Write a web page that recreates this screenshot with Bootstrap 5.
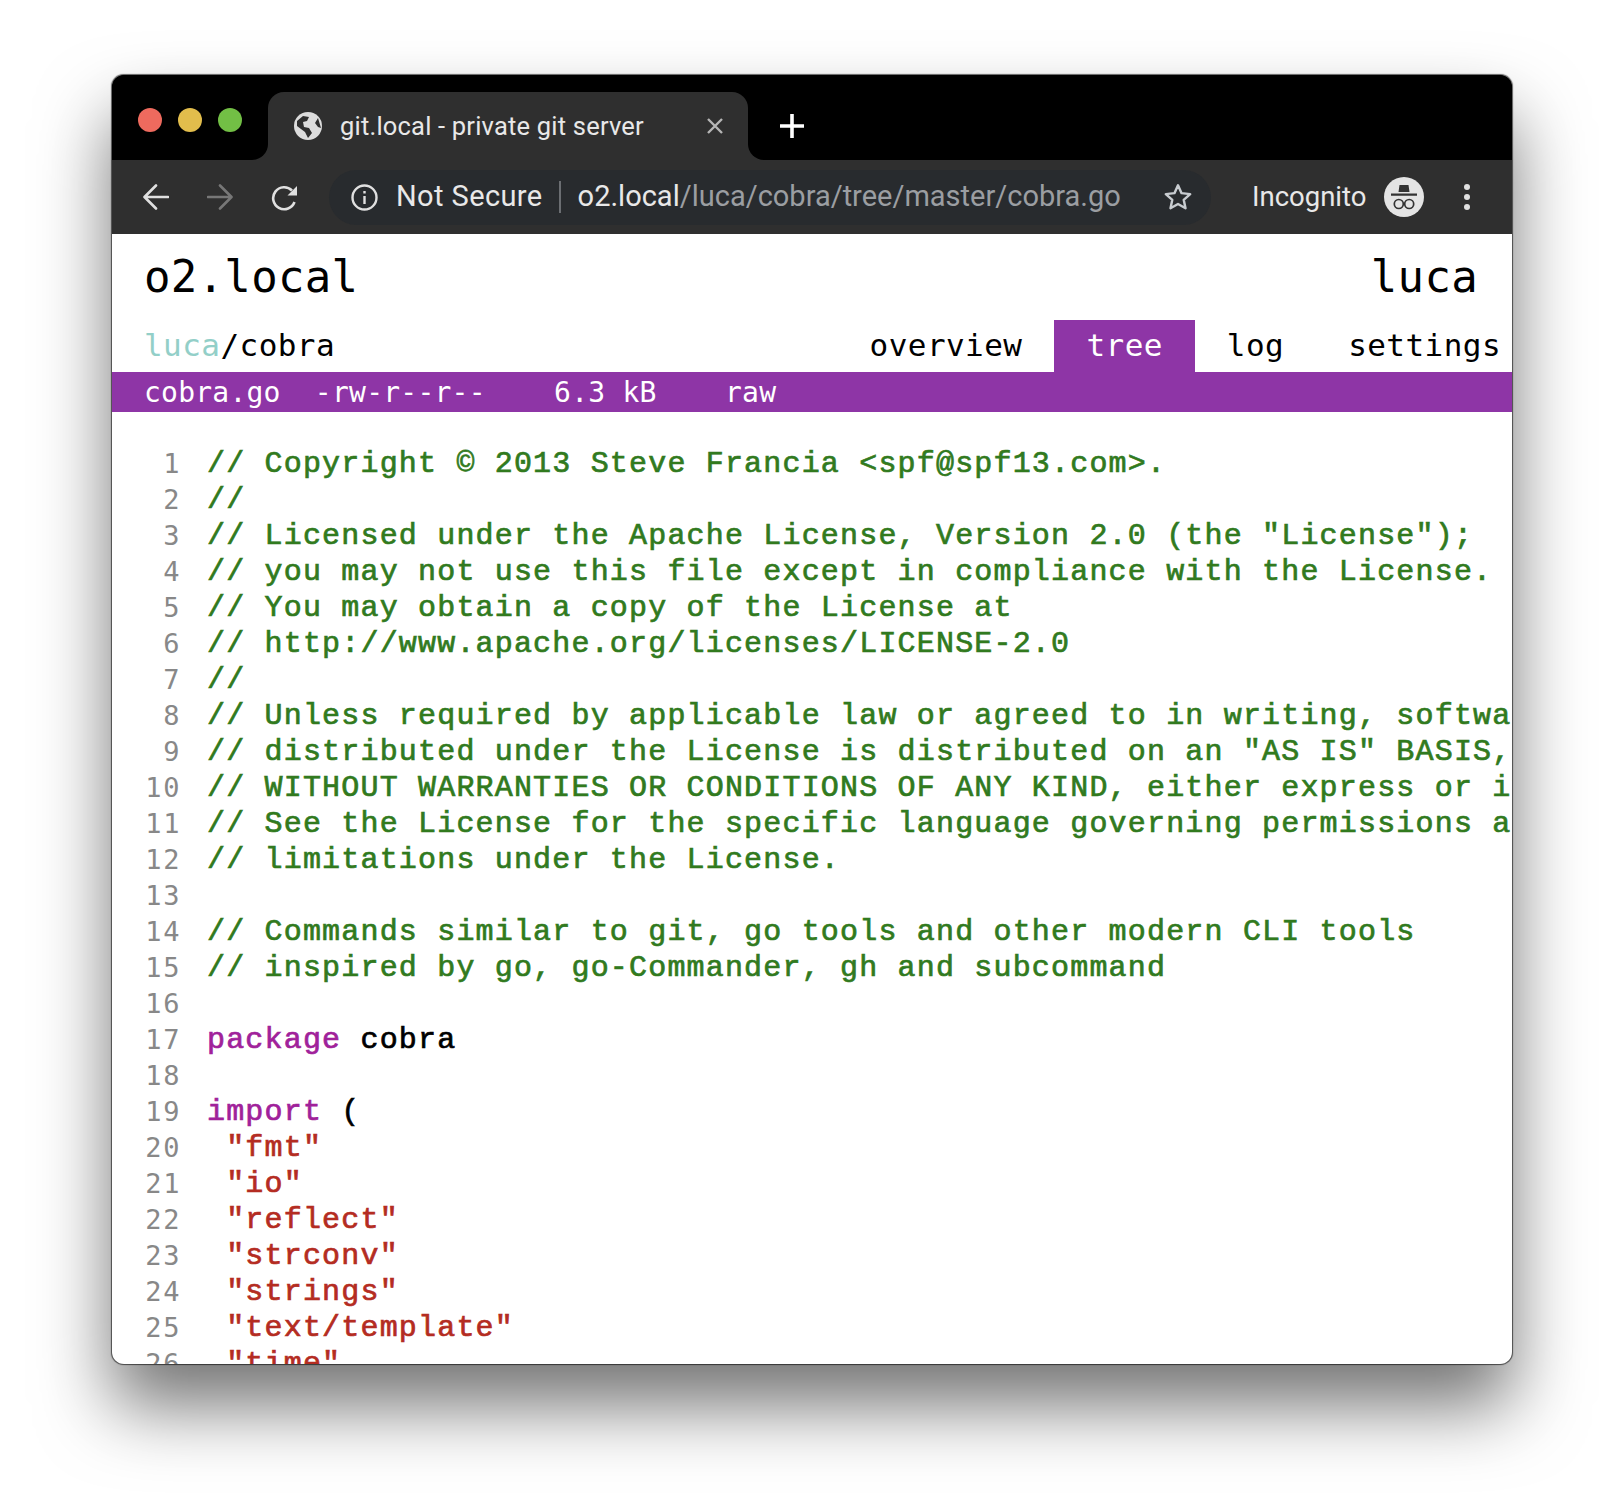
<!DOCTYPE html>
<html lang="en"><head><meta charset="utf-8"><title>git.local - private git server</title>
<link href="https://cdn.jsdelivr.net/npm/bootstrap@5.3.0/dist/css/bootstrap.min.css" rel="stylesheet">
<style>
html,body{height:100%;margin:0}
body{background:#fff;overflow:hidden}
.stage{padding:75px 112px 0;height:1512px;background:#fff}
.win{height:1289px;border-radius:12px;overflow:hidden;box-shadow:0 0 1px .5px rgba(0,0,0,.6),0 42px 72px rgba(0,0,0,.55);background:#fff;display:flex;flex-direction:column}
.chrome-top{height:85px;background:linear-gradient(#000 60%,#2f2f2f 60%);flex:none}
.lights{width:156px;gap:16px;padding:4px 0 0 26px;background:#000;border-bottom-right-radius:16px}
.dot{width:24px;height:24px;border-radius:50%}
.d1{background:#ee6a5e}.d2{background:#e2bd4c}.d3{background:#72bf45}
.tabx{width:480px;height:68px;margin-top:17px;background:#2f2f2f;border-radius:16px 16px 0 0;color:#e8e8e8;font:25.5px Roboto,"Liberation Sans",sans-serif;letter-spacing:.2px;padding:0 24px 0 26px}
.tabx .tt{margin-left:18px;flex:1;white-space:nowrap}
.tab-rest{background:#000;border-bottom-left-radius:16px;padding:16px 0 0 31px}
.chrome-bar{height:74px;background:#2f2f2f;flex:none;color:#e8e8e8;font-family:Roboto,"Liberation Sans",sans-serif;padding:0 0 0 31px;gap:38px}
.omni{width:882px;height:55px;margin-left:-7px;border-radius:28px;background:#282b2e;font-size:29px;padding:0 0 0 22px;white-space:nowrap}
.omni .lbl{margin-left:18px;letter-spacing:.4px}
.omni .sep{width:2px;height:32px;background:#6b6e72;margin:0 17px 0 16px}
.omni .dim{color:#9b9ea2}
.bar-right{margin-left:3px}
.inc{font-size:27.5px}
.inc-ico{width:40px;height:40px;border-radius:50%;background:#e4e4e4;margin-left:18px;margin-right:38px}
.page{flex:1;overflow:hidden}
.ftxt{font-family:"DejaVu Sans Mono","Liberation Mono",monospace;color:#000}
.head1{font-size:44px;line-height:50px;padding:18px 34px 0 32px;height:86px;letter-spacing:.3px}
.head2{height:52px;font-size:31px;padding:0 0 0 32px;letter-spacing:.44px}
.head2 a{color:inherit;text-decoration:none;padding:0 32px 2px;height:52px;display:flex;align-items:center}
.head2 a.lastx{padding-right:11px}
.head2 .crumb{padding-bottom:2px}
.head2 .ac{background:#8e35a6;color:#fff}
.lnk{color:#93cfc8}
.bar{background:#8e35a6;color:#fff;height:40px;font-size:28px;letter-spacing:.23px;padding:1px 32px 0;white-space:pre;line-height:40px}
.codebox{padding:34px 0 0 0;display:flex;font:400 30px/36px "Liberation Mono",monospace;letter-spacing:1.18px}
.nums{width:69px;text-align:right;color:#888;flex:none;margin-right:26px;font:400 27px/36px "DejaVu Sans Mono",monospace;letter-spacing:1.6px;white-space:pre}
.srcx{margin:0;font:inherit;white-space:pre;overflow:visible;color:#000;-webkit-text-stroke:.7px currentColor}
.cm{color:#317a1e}.kw{color:#a0219a}.st{color:#b42c22}
</style></head><body>
<div class="stage"><div class="win">
<div class="chrome-top d-flex">
 <div class="lights d-flex align-items-center"><span class="dot d1"></span><span class="dot d2"></span><span class="dot d3"></span></div>
 <div class="tabx d-flex align-items-center">
  <svg width="28" height="28" viewBox="0 0 28 28"><circle cx="14" cy="14" r="14" fill="#dcdcdc"/><path d="M3 9l6-5 6 1-2 4-4 1 1 5 5 1 3 5-4 5-3-6-4-3-4-3zM24 6l-3 5 3 4 3 1z" fill="#2f2f2f"/></svg>
  <span class="tt">git.local - private git server</span>
  <svg width="18" height="18" viewBox="0 0 18 18"><path d="M2 2l14 14M16 2L2 16" stroke="#b5b5b5" stroke-width="2.4"/></svg>
 </div>
 <div class="tab-rest flex-grow-1 d-flex align-items-center">
 <svg width="26" height="26" viewBox="0 0 26 26"><path d="M13 1v24M1 13h24" stroke="#fff" stroke-width="3.6"/></svg>
 </div>
</div>
<div class="chrome-bar d-flex align-items-center">
 <svg width="26" height="26" viewBox="0 0 26 26" fill="none" stroke="#e0e0e0" stroke-width="2.6" stroke-linecap="round" stroke-linejoin="round"><path d="M25 13H2M13 1.5 1.5 13 13 24.5"/></svg>
 <svg width="26" height="26" viewBox="0 0 26 26" fill="none" stroke="#777" stroke-width="2.6" stroke-linecap="round" stroke-linejoin="round"><path d="M1 13h23M13 1.5 24.5 13 13 24.5"/></svg>
 <svg width="27" height="27" viewBox="0 0 27 27" fill="none" stroke="#e0e0e0" stroke-width="2.6"><path d="M23.5 18A11 11 0 1 1 21 6.5"/><path d="M26 2v9.500h-9.500z" fill="#e0e0e0" stroke="none"/></svg>
 <div class="omni d-flex align-items-center">
  <svg width="27" height="27" viewBox="0 0 27 27" fill="none" stroke="#e0e0e0" stroke-width="2.4"><circle cx="13.5" cy="13.5" r="12"/><path d="M13.5 12v8M13.5 7v2.600"/></svg>
  <span class="lbl">Not Secure</span><span class="sep"></span><span>o2.local</span><span class="dim">/luca/cobra/tree/master/cobra.go</span>
  <svg class="ms-auto" style="margin-right:18px" width="30" height="30" viewBox="0 0 32 32" fill="none" stroke="#c8ccd0" stroke-width="2.6" stroke-linejoin="round"><path d="M16 3.500l3.800 8.400 9.200 1-6.900 6.100 1.900 9-8-4.600-8 4.600 1.900-9L3 12.900l9.200-1z"/></svg>
 </div>
 <div class="d-flex align-items-center bar-right">
 <span class="inc">Incognito</span>
 <div class="inc-ico d-flex align-items-center justify-content-center">
  <svg width="40" height="40" viewBox="0 0 40 40"><path d="M15.500 8h9l1 7H14.500zM7 16.500h26v2.200H7z" fill="#333"/><g fill="none" stroke="#333" stroke-width="1.700"><circle cx="14.800" cy="27" r="4.500"/><circle cx="25.200" cy="27" r="4.500"/><path d="M19 26.500h2"/></g></svg>
 </div>
 <svg width="10" height="28" viewBox="0 0 10 28" fill="#e0e0e0"><circle cx="5" cy="4" r="3"/><circle cx="5" cy="14" r="3"/><circle cx="5" cy="24" r="3"/></svg>
 </div>
</div>
<div class="page">
 <div class="ftxt head1 d-flex justify-content-between"><span>o2.local</span><span>luca</span></div>
 <div class="ftxt head2 d-flex justify-content-between align-items-center"><span class="crumb"><span class="lnk">luca</span>/cobra</span>
  <div class="d-flex"><a href="#">overview</a><a href="#" class="ac">tree</a><a href="#">log</a><a href="#" class="lastx">settings</a></div></div>
 <div class="ftxt bar">cobra.go  -rw-r--r--    6.3 kB    raw</div>
 <div class="codebox"><div class="nums"> 1
 2
 3
 4
 5
 6
 7
 8
 9
10
11
12
13
14
15
16
17
18
19
20
21
22
23
24
25
26</div><pre class="srcx"><span class="cm">// Copyright © 2013 Steve Francia &lt;spf@spf13.com&gt;.
//
// Licensed under the Apache License, Version 2.0 (the "License");
// you may not use this file except in compliance with the License.
// You may obtain a copy of the License at
// http://www.apache.org/licenses/LICENSE-2.0
//
// Unless required by applicable law or agreed to in writing, software
// distributed under the License is distributed on an "AS IS" BASIS,
// WITHOUT WARRANTIES OR CONDITIONS OF ANY KIND, either express or implied.
// See the License for the specific language governing permissions and
// limitations under the License.</span>

<span class="cm">// Commands similar to git, go tools and other modern CLI tools
// inspired by go, go-Commander, gh and subcommand</span>

<span class="kw">package</span> cobra

<span class="kw">import</span> (
 <span class="st">"fmt"</span>
 <span class="st">"io"</span>
 <span class="st">"reflect"</span>
 <span class="st">"strconv"</span>
 <span class="st">"strings"</span>
 <span class="st">"text/template"</span>
 <span class="st">"time"</span></pre></div>
</div>
</div></div>
</body></html>
